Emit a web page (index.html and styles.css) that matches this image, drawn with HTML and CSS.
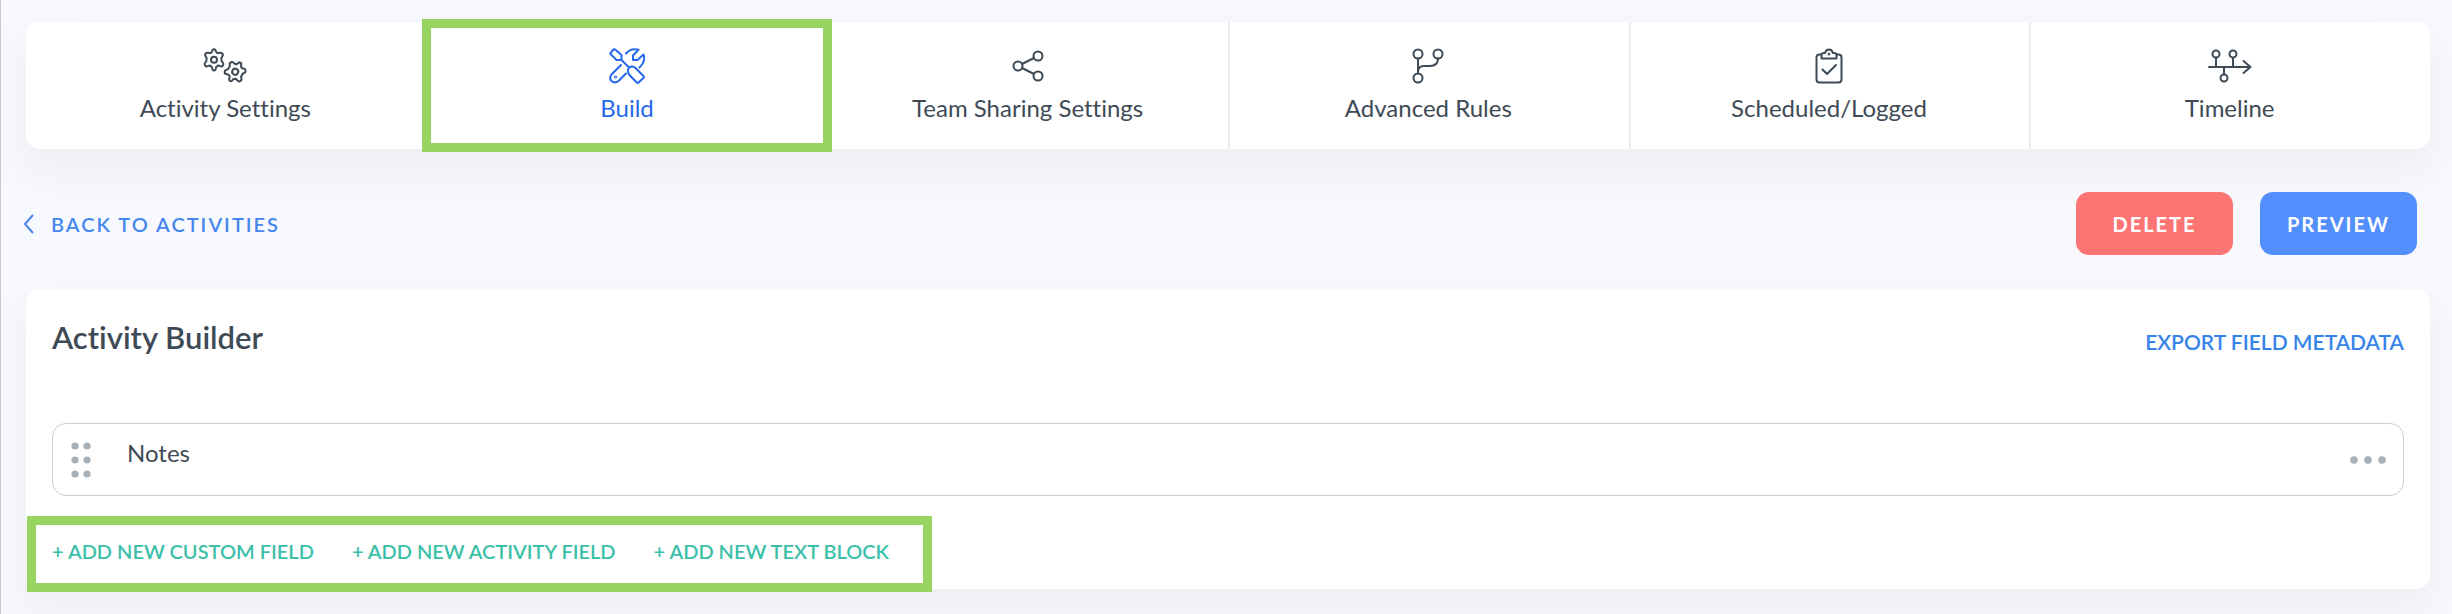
FILE: index.html
```html
<!DOCTYPE html>
<html lang="en">
<head>
    <meta charset="UTF-8">
    <meta name="viewport" content="width=device-width, initial-scale=1.0">
    <title>Activity Builder</title>
    <link rel="stylesheet" href="styles.css">
</head>
<body>

<nav class="tabs">
    <a class="tab" href="#settings">
        <svg class="icon" width="46" height="36" viewBox="0 0 46 36">
            <g id="gear">
                <path d="M10.2 3.2Q10.4 1.2 12 1.2Q13.6 1.2 13.8 3.2L15 5L17.2 5Q19.200 4.100 20.200 5.500Q21.600 7 20.200 8.500L19.400 10L19.600 13.200L20.800 14.600Q22 16 20.800 17.600Q19.800 19 18 18L16 17.600L14 19.200L13.700 21Q13.400 22.400 12 22.400Q10.600 22.400 10.300 21L10 19.200L8 17.600L6 18Q4.200 19 3.200 17.600Q2 16 3.200 14.600L4.400 13.200L4.600 10L3.800 8.500Q2.400 7 3.800 5.500Q4.800 4.100 6.800 5L9 5Z"/>
                <circle cx="12" cy="11.800" r="3"/>
            </g>
            <use href="#gear" transform="translate(21.200 12) rotate(30 12 11.800)"/>
        </svg>
        <span>Activity Settings</span>
    </a>
    <a class="tab tab-active" href="#build">
        <svg class="icon" width="36" height="36" viewBox="0 0 36 36">
            <path d="M1.500 5L4.500 1.500Q5.500 1 6.500 1.800L12.500 7V12H7.500L2 6.500Q1 5.700 1.500 5ZM12.500 12L20 19.500"/>
            <path d="M20 19.500Q23 17.500 26 19.500L34.500 28Q35.300 29 34.500 30L29.500 34.500Q28.700 35.300 27.700 34.500L20 26.500Q18 23 20 19.500Z"/>
            <path d="M12 17L2.500 26.500Q-.2 30 2.500 33Q6 35.800 9.500 33L17 25.500"/>
            <path d="M17 5.500Q22 -.5 29.500 1.800L24 7.500V12H28.500L34.500 6.500Q37 13.500 30.500 19.500"/>
            <circle cx="6.500" cy="29" r=".5"/>
        </svg>
        <span>Build</span>
    </a>
    <a class="tab" href="#sharing">
        <svg class="icon" width="36" height="36" viewBox="0 0 36 36">
            <circle cx="8" cy="18" r="4.500"/>
            <circle cx="28" cy="8" r="4.500"/>
            <circle cx="28" cy="28" r="4.500"/>
            <path d="M12 16L24 10M12 20L24 26"/>
        </svg>
        <span>Team Sharing Settings</span>
    </a>
    <a class="tab" href="#rules">
        <svg class="icon" width="36" height="36" viewBox="0 0 36 36">
            <circle cx="8" cy="6" r="4.500"/>
            <circle cx="28" cy="6" r="4.500"/>
            <circle cx="8" cy="30" r="4.500"/>
            <path d="M8 10.500V25.500M8 24Q8 18 14 18H20Q28 18 28 10.500"/>
        </svg>
        <span>Advanced Rules</span>
    </a>
    <a class="tab" href="#logged">
        <svg class="icon" width="36" height="36" viewBox="0 0 36 36">
            <path d="M10 6.500H8.500Q5.500 6.500 5.500 9.500V31.500Q5.500 34.500 8.500 34.500H27.500Q30.500 34.500 30.500 31.500V9.500Q30.500 6.500 27.500 6.500H26"/>
            <path d="M10.500 10.500V7Q10.500 5 13 5H14Q15 1.500 18 1.500Q21 1.500 22 5H23Q25.500 5 25.500 7V10.500H10.500ZM11.500 21.500L16 26L25 17"/>
            <circle cx="18" cy="6" r=".5"/>
        </svg>
        <span>Scheduled/Logged</span>
    </a>
    <a class="tab" href="#timeline">
        <svg class="icon" width="46" height="36" viewBox="0 0 46 36">
            <circle cx="9" cy="6" r="3.500"/>
            <circle cx="26" cy="6" r="3.500"/>
            <circle cx="17" cy="30" r="3.500"/>
            <path d="M2 19H43M9 10V19M26 10V19M17 19V26M36.500 13L43.500 19L36.500 25"/>
        </svg>
        <span>Timeline</span>
    </a>
</nav>

<div class="toolbar">
    <a class="back" href="#activities">
        <svg class="chevron" width="12" height="20" viewBox="0 0 12 20"><path d="M10 1L2 10L10 19"/></svg>
        BACK TO ACTIVITIES
    </a>
    <div class="actions">
        <button class="btn btn-delete" type="button">DELETE</button>
        <button class="btn btn-preview" type="button">PREVIEW</button>
    </div>
</div>

<main class="builder">
    <header class="builder-header">
        <h1>Activity Builder</h1>
        <a class="export" href="#export">EXPORT FIELD METADATA</a>
    </header>

    <div class="field">
        <button class="dots" type="button" aria-label="Move field">
            <svg width="22" height="36" viewBox="0 0 22 36">
                <circle cx="5" cy="4" r="3.600"/>
                <circle cx="17" cy="4" r="3.600"/>
                <circle cx="5" cy="18" r="3.600"/>
                <circle cx="17" cy="18" r="3.600"/>
                <circle cx="5" cy="32" r="3.600"/>
                <circle cx="17" cy="32" r="3.600"/>
            </svg>
        </button>
        <span class="field-name">Notes</span>
        <button class="dots" type="button" aria-label="Field options">
            <svg width="36" height="8" viewBox="0 0 36 8">
                <circle cx="4" cy="4" r="3.800"/>
                <circle cx="18" cy="4" r="3.800"/>
                <circle cx="32" cy="4" r="3.800"/>
            </svg>
        </button>
    </div>

    <div class="add-links">
        <a href="#custom">+ ADD NEW CUSTOM FIELD</a>
        <a href="#activity">+ ADD NEW ACTIVITY FIELD</a>
        <a href="#text">+ ADD NEW TEXT BLOCK</a>
    </div>
</main>

</body>
</html>
```
FILE: styles.css
```css
* {
    box-sizing: border-box;
}

body {
    margin: 0;
    min-height: 100vh;
    padding: 22px 22px 25px 25px;
    border-left: 1px solid #c8c9ce;
    background: #f8f9fe;
    color: #3e4a56;
    font-family: Lato, "Open Sans", sans-serif;
    font-size: 24px;
    line-height: 32px;
    font-variant-ligatures: none;
}

a {
    text-decoration: none;
}

.tabs {
    display: grid;
    grid-template-columns: repeat(6, 1fr);
    background: #fff;
    border-radius: 14px;
    box-shadow: 0 20px 50px rgba(40, 45, 60, 0.06);
}

.tab {
    display: flex;
    flex-direction: column;
    align-items: center;
    gap: 8px;
    height: 127px;
    padding: 26px 2px 0 0;
    border-left: 2px solid #ebecee;
    color: #3e4a56;
}

.tab:first-child {
    border-left: 0;
}

.tab-active {
    position: relative;
    color: #2668ea;
}

/* green callout round the open tab */
.tab-active::after {
    content: "";
    position: absolute;
    inset: -3px -5px -3px -7px;
    border: 9px solid #98d461;
}

.icon {
    fill: none;
    stroke: currentColor;
    stroke-width: 2;
    stroke-linecap: round;
    stroke-linejoin: round;
}

.toolbar {
    display: flex;
    justify-content: space-between;
    align-items: center;
    margin: 43px 0 35px;
    padding-right: 13px;
}

.back {
    display: flex;
    align-items: center;
    gap: 16px;
    margin-left: -3px;
    color: #4687ee;
    font-size: 20px;
    font-weight: 600;
    letter-spacing: 2px;
}

.chevron {
    fill: none;
    stroke: currentColor;
    stroke-width: 2;
}

.actions {
    display: flex;
    gap: 27px;
}

.btn {
    width: 157px;
    height: 63px;
    padding: 0;
    border: 0;
    border-radius: 13px;
    color: #fff;
    font: inherit;
    font-size: 20px;
    font-weight: 700;
    letter-spacing: 2px;
}

.btn-delete {
    background: #fd7475;
}

.btn-preview {
    background: #528ffc;
}

.builder {
    display: flow-root;
    padding: 27px 26px 0;
    background: #fff;
    border-radius: 14px;
    box-shadow: 0 20px 50px rgba(40, 45, 60, 0.06);
}

.builder-header {
    display: flex;
    justify-content: space-between;
    align-items: center;
    margin-bottom: 66px;
}

h1 {
    margin: 0;
    font-size: 31px;
    font-weight: 600;
    line-height: 40px;
}

.export {
    padding-top: 10px;
    line-height: 30px;
    color: #3583ea;
    font-size: 21px;
    font-weight: 600;
}

.field {
    display: flex;
    align-items: center;
    height: 73px;
    padding: 0 17px;
    border: 1px solid #c9d0d4;
    border-radius: 14px;
}

.field-name {
    flex: 1;
    padding: 0 35px 14px;
}

.dots {
    display: flex;
    padding: 0;
    border: 0;
    background: none;
    fill: #a6b0b8;
}

/* green callout round the links, hangs over the card's bottom edge */
.add-links {
    display: flex;
    gap: 38px;
    width: fit-content;
    margin: 20px 0 -3px -25px;
    padding: 11px 34px 17px 16px;
    border: 9px solid #98d461;
    font-size: 20px;
    font-weight: 600;
    line-height: 30px;
}

.add-links a {
    color: #3cbfa9;
}
```
